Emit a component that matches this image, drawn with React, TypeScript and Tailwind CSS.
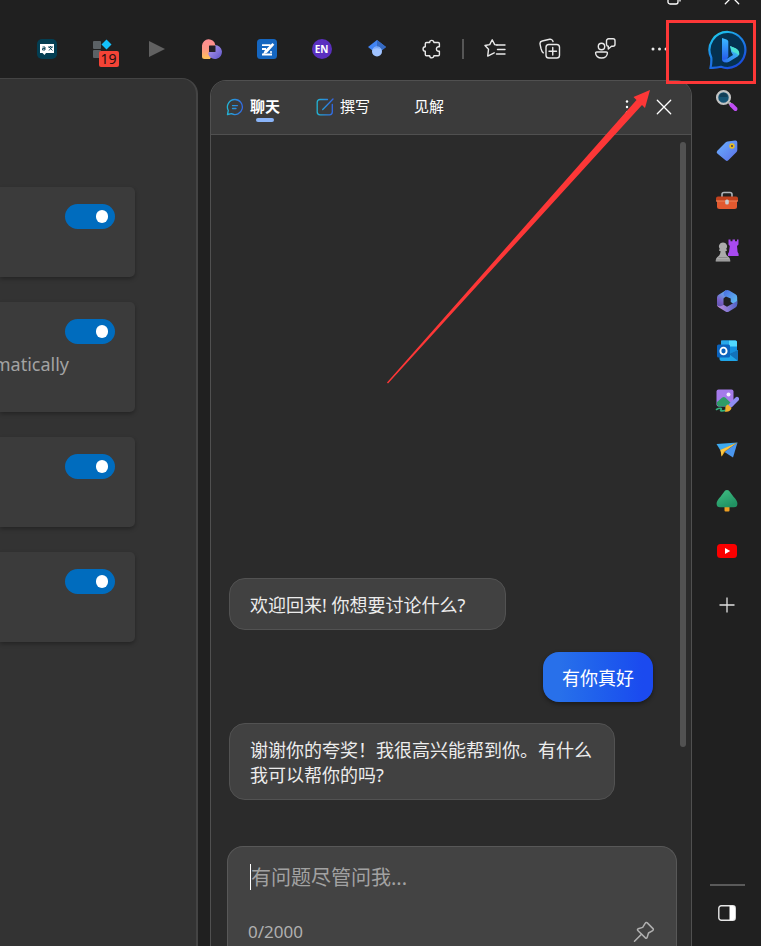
import React, { useState } from "react";

type IconProps = { className?: string };

const line = {
  fill: "none",
  stroke: "currentColor",
  strokeLinecap: "round" as const,
  strokeLinejoin: "round" as const,
};

/* ---------- toolbar icons ---------- */

function DictionaryIcon() {
  return (
    <svg width="20" height="20" viewBox="0 0 20 20">
      <rect width="20" height="20" rx="5" fill="#033e52" />
      <path d="M3 5h14v9H9l-1.500 2-2-2H3z" fill="#fff" />
      <path d="M5.500 8h2.500v3H5.500V9.500H8M11 8h5M13.500 7v1M12 11.500l3-3.500M12 8l3.500 3.500" stroke="#033e52" strokeWidth="0.900" fill="none" />
    </svg>
  );
}

function BlocksIcon() {
  return (
    <svg width="20" height="20" viewBox="0 0 20 20">
      <rect x="1" y="2" width="8" height="8" rx="1" fill="#5b6165" />
      <rect x="1" y="11" width="8" height="8" rx="1" fill="#5b6165" />
      <path d="M14.500 0.500l5 5-5 5-5-5z" fill="#13c0fb" />
    </svg>
  );
}

function PlayIcon() {
  return (
    <svg width="20" height="20" viewBox="0 0 20 20">
      <path d="M2 2l16 8-16 8z" fill="#616161" />
    </svg>
  );
}

function SwirlIcon() {
  return (
    <svg width="22" height="22" viewBox="0 0 22 22">
      <defs>
        <linearGradient id="swirlWarm" x1="0" y1="0" x2="0" y2="1">
          <stop offset="0" stopColor="#ff8d92" />
          <stop offset="0.500" stopColor="#ff9686" />
          <stop offset="1" stopColor="#ffc457" />
        </linearGradient>
        <linearGradient id="swirlCool" x1="0" y1="0" x2="1" y2="1">
          <stop offset="0" stopColor="#b79df0" />
          <stop offset="1" stopColor="#5d55c8" />
        </linearGradient>
      </defs>
      <path d="M1 7.500a6.700 6.700 0 0 1 13.300-.5v4L9 21H3.500A2.500 2.500 0 0 1 1 18.500z" fill="url(#swirlWarm)" />
      <path d="M14 7a7 7 0 1 1-6.500 9.700C7 15.500 7.500 14.500 8 14h6z" fill="url(#swirlCool)" />
      <rect x="8" y="7.500" width="6.500" height="6.500" rx="0.500" fill="#232027" />
    </svg>
  );
}

function NoteIcon() {
  return (
    <svg width="20" height="20" viewBox="0 0 20 20">
      <rect width="20" height="20" rx="3.500" fill="#1566c0" />
      <path d="M5 6.200h8.500M5 10h4M5 15.500h10" stroke="#fff" strokeWidth="1.800" />
      <path d="M15.500 4l1.800 1.800-7.300 8-4 1.700 1.500-3.800z" fill="#fff" />
      <path d="M13 13h2" stroke="#fff" strokeWidth="1.500" />
    </svg>
  );
}

function ScholarIcon() {
  return (
    <svg width="20" height="20" viewBox="0 0 20 20">
      <path d="M10 1L1 8l5 4h8l5-4z" fill="#4285f4" />
      <path d="M10 1l9 7-5 4h-4z" fill="#356ac3" />
      <circle cx="10" cy="12.500" r="5" fill="#a0c3ff" />
      <path d="M5.500 10.500a5 5 0 0 1 9 0 9 9 0 0 0-9 0z" fill="#76a7fa" />
    </svg>
  );
}

function PuzzleIcon() {
  return (
    <svg width="20" height="20" viewBox="0 0 20 20" {...line} strokeWidth="1.400">
      <path d="M4.500 3.500h3.200a2 2 0 0 1 4.200 0h4.300a1.200 1.200 0 0 1 1.200 1.200v3.100h-1.200a2.300 2.300 0 0 0 0 4.500h1.200v3.300a1.200 1.200 0 0 1-1.200 1.200h-4.300a2 2 0 0 1-4.200 0H4.500a1.200 1.200 0 0 1-1.200-1.200v-3.300a2.200 2.200 0 0 1 0-4.500V4.700a1.200 1.200 0 0 1 1.200-1.200z" />
    </svg>
  );
}

function FavoritesIcon() {
  return (
    <svg width="22" height="22" viewBox="0 0 22 22" {...line} strokeWidth="1.400">
      <path d="M13 7l-2.300-.4L8.200 1.800 5.700 6.600 1 7.500l3.500 3.800-.8 6.800 4.500-2.300 2-1" />
      <path d="M13 7h8M13.500 11.500H21M12.500 16H21" />
    </svg>
  );
}

function CollectionsIcon() {
  return (
    <svg width="22" height="22" viewBox="0 0 22 22" {...line} strokeWidth="1.400">
      <path d="M4.300 14.800C3 14 2.500 12.500 2 10.500L1.100 6.300A2.800 2.800 0 0 1 3.200 3l7.500-1.700A2.800 2.800 0 0 1 14 3.500" />
      <rect x="7" y="6.500" width="13.500" height="13.500" rx="2.800" />
      <path d="M13.750 9.500v7.500M10 13.250h7.500" />
    </svg>
  );
}

function FeedbackIcon() {
  return (
    <svg width="22" height="22" viewBox="0 0 22 22" {...line} strokeWidth="1.400">
      <circle cx="7.500" cy="8.500" r="3.200" />
      <path d="M2.700 14h9.600a1.100 1.100 0 0 1 1.100 1.100c0 2.800-2.500 4.900-5.900 4.900s-5.900-2.100-5.900-4.900A1.100 1.100 0 0 1 2.700 14z" />
      <path d="M12.500 2.800a2 2 0 0 1 2-2H19a2 2 0 0 1 2 2v3.400a2 2 0 0 1-2 2h-1.500L14.300 11V8.200a2 2 0 0 1-1.800-2z" />
    </svg>
  );
}

function MoreIcon() {
  return (
    <svg width="20" height="20" viewBox="0 0 20 20" fill="currentColor">
      <circle cx="3" cy="10" r="1.500" />
      <circle cx="9.500" cy="10" r="1.500" />
      <circle cx="16" cy="10" r="1.500" />
    </svg>
  );
}

/* ---------- side rail icons ---------- */

function BingIcon() {
  return (
    <svg width="40" height="40" viewBox="0 0 40 40">
      <defs>
        <linearGradient id="bingRing" x1="0" y1="0" x2="0.600" y2="1">
          <stop offset="0" stopColor="#1fd6ee" />
          <stop offset="0.500" stopColor="#1c86e8" />
          <stop offset="1" stopColor="#1a4fdd" />
        </linearGradient>
        <linearGradient id="bingStem" x1="0" y1="0" x2="0" y2="1">
          <stop offset="0" stopColor="#3bb9ff" />
          <stop offset="1" stopColor="#2350ea" />
        </linearGradient>
        <linearGradient id="bingLeaf" x1="0" y1="1" x2="1" y2="0">
          <stop offset="0" stopColor="#2b6ff0" />
          <stop offset="0.600" stopColor="#38a6f4" />
          <stop offset="1" stopColor="#45e6d0" />
        </linearGradient>
      </defs>
      <path d="M20.500 2A18 18 0 1 1 13 36.800c-3 .8-6.500 1.200-10.500 1 .8-3 1-6 .8-10A18 18 0 0 1 20.500 2z" fill="#053150" stroke="url(#bingRing)" strokeWidth="2.200" />
      <path d="M14 8l4.500 1.600c1.200.5 1.800 1.200 1.800 2.400v14.500L17 32.500c-2-.3-3-1.500-3-3.500z" fill="url(#bingStem)" />
      <path d="M22 16l6 2.500c3 1.500 4 5 2 7.700l-8.500 5.300c-3.500 2-6.500.5-7.500-2.500 1.500 1.200 3 1 4.500 0l6.500-4-1.800-3z" fill="url(#bingLeaf)" />
      <path d="M22 16l5.500 2.200c3.200 1.500 4.500 4.800 3.500 7.300-1-1.700-2.800-2.500-5.500-3.300l-1.500-1z" fill="#4be2d4" />
    </svg>
  );
}

function SearchIcon() {
  return (
    <svg width="24" height="24" viewBox="0 0 24 24">
      <path d="M14 13.500l5 5" stroke="#b9b9b9" strokeWidth="2.500" />
      <path d="M16.500 16l4 4" stroke="#c04df5" strokeWidth="4" strokeLinecap="round" />
      <circle cx="8.500" cy="8.500" r="6.400" fill="#155475" stroke="#c3c3c3" strokeWidth="2.300" />
      <path d="M4.500 8a4 4 0 0 1 8 0z" fill="#123e57" />
    </svg>
  );
}

function TagIcon() {
  return (
    <svg width="24" height="24" viewBox="0 0 24 24">
      <defs>
        <linearGradient id="tagBlue" x1="0" y1="0" x2="1" y2="1">
          <stop offset="0" stopColor="#6ab2ff" />
          <stop offset="1" stopColor="#5b6fe6" />
        </linearGradient>
      </defs>
      <path d="M12.500 2.500L20 1.500a2 2 0 0 1 2.300 2V11a3 3 0 0 1-1 2.200l-8 8a2 2 0 0 1-2.800 0L2.300 14.500a2 2 0 0 1 0-2.800L10 4a4 4 0 0 1 2.500-1.500z" fill="url(#tagBlue)" />
      <circle cx="17" cy="7" r="2.700" fill="#e9bd1d" />
      <circle cx="17" cy="7" r="1" fill="#3c3a60" />
    </svg>
  );
}

function ToolboxIcon() {
  return (
    <svg width="24" height="24" viewBox="0 0 24 24">
      <path d="M7 8V5.500A2 2 0 0 1 9 3.500h6a2 2 0 0 1 2 2V8" stroke="#aeb3b8" strokeWidth="1.600" fill="none" />
      <path d="M2 11h20v6.500a2.500 2.500 0 0 1-2.500 2.500h-15A2.500 2.500 0 0 1 2 17.500z" fill="#e2592f" />
      <path d="M3 7.500h18a2 2 0 0 1 2 2v2.700H1V9.500a2 2 0 0 1 2-2z" fill="#c2411d" />
      <path d="M1 12h22" stroke="#f38b60" strokeWidth="1" />
      <rect x="10.200" y="10.500" width="3.600" height="5" rx="1.500" fill="#c9cdd0" />
    </svg>
  );
}

function ChessIcon() {
  return (
    <svg width="24" height="24" viewBox="0 0 24 24">
      <path d="M13.500 0.500h2v1.800h2V0.500H20v1.800h2V0.500h1.500V5.500L22 7l.6 6 1 1.800v2.200H13v-2.200l1-1.800.8-6-1.300-1.500z" fill="#a94af0" />
      <path d="M8 3.500a4 4 0 0 1 3 6.700h.8V12H10.500c0 3 1 4.500 3.500 6.500 1 1 1.300 2.200 1.300 4H.7c0-1.800.3-3 1.300-4C4.500 16.500 5.500 15 5.500 12H4.200v-1.800H5A4 4 0 0 1 8 3.500z" fill="#ababab" />
      <path d="M3.500 18.500h9M1 21h14" stroke="#8b8b8b" strokeWidth="1" />
    </svg>
  );
}

function OfficeIcon() {
  return (
    <svg width="24" height="24" viewBox="0 0 24 24">
      <defs>
        <linearGradient id="officeA" x1="0" y1="0" x2="1" y2="1">
          <stop offset="0" stopColor="#4b6be0" />
          <stop offset="1" stopColor="#61c7f3" />
        </linearGradient>
        <linearGradient id="officeB" x1="0.500" y1="0" x2="0" y2="1">
          <stop offset="0" stopColor="#64b5f2" />
          <stop offset="0.600" stopColor="#7a5fc5" />
          <stop offset="1" stopColor="#5350a5" />
        </linearGradient>
        <linearGradient id="officeC" x1="0" y1="0" x2="1" y2="0">
          <stop offset="0" stopColor="#c78fe0" />
          <stop offset="1" stopColor="#4f65c8" />
        </linearGradient>
      </defs>
      <path d="M11 1.300L4 5.500A3.500 3.500 0 0 0 2 8.800v6.700a3 3 0 0 0 5 1.800l1.500-1.500V9.500l5-4.500z" fill="url(#officeB)" />
      <path d="M10.500 1.500c1.200-.8 2.500-.8 3.700 0l6.300 3.800A3.500 3.500 0 0 1 22.200 8.500v6c0 2-1.500 1.500-2.500 1l-4-2.500V9.500L9 6.800c-1-2-.5-4 1.500-5.300z" fill="url(#officeA)" />
      <path d="M22.200 11v4.500a3.500 3.500 0 0 1-1.700 3L14 22.500a3.500 3.500 0 0 1-3.500 0L4 18.500a3.500 3.500 0 0 1-2-3c1 1.800 3 2.300 4.500 1.500l2-1.200 3.500 2 7-4c2-1 3-1.500 3.200-2.800z" fill="url(#officeC)" />
    </svg>
  );
}

function OutlookIcon() {
  return (
    <svg width="24" height="24" viewBox="0 0 24 24">
      <rect x="6" y="1.500" width="16" height="14" rx="1.500" fill="#1490df" />
      <path d="M14 1.500h6.500A1.500 1.500 0 0 1 22 3v4.500h-8z" fill="#50d9ff" />
      <path d="M6 1.500h8v6H6z" fill="#28a8ea" />
      <path d="M4.500 12l9.500 3 9-4v9.500a1.500 1.500 0 0 1-1.500 1.500h-15a2 2 0 0 1-2-2z" fill="#1fa5e8" />
      <path d="M23 11v9.500a1 1 0 0 1-.5 1L14 15z" fill="#1272bb" />
      <rect x="2" y="5.500" width="13" height="13" rx="1.500" fill="#0a63bd" />
      <ellipse cx="8.500" cy="12" rx="3.100" ry="3.400" fill="none" stroke="#fff" strokeWidth="1.900" />
    </svg>
  );
}

function DesignerIcon() {
  return (
    <svg width="24" height="24" viewBox="0 0 24 24">
      <rect x="1.500" y="0.500" width="17" height="17" rx="2" fill="#a57bea" />
      <path d="M2 16v-3l5-4.200a2.500 2.500 0 0 1 3.500 0L17 15v2.500H3.500z" fill="#2f9c68" />
      <circle cx="13.500" cy="5.500" r="2" fill="#f4edff" />
      <path d="M1.500 20.500c3-2 6-1.500 4.500 0s1 2 5 .5" stroke="#32b17c" strokeWidth="1.600" fill="none" strokeLinecap="round" />
      <path d="M22 10l-6.500 6.500" stroke="#8f8df2" strokeWidth="4.200" strokeLinecap="round" />
      <path d="M13 15.500l3.500 3.500c-.5 3-4 4.500-7 3.500 1.500-1 .8-2 .8-3.500s1-3 2.700-3.500z" fill="#f2b12c" />
    </svg>
  );
}

function DropIcon() {
  return (
    <svg width="24" height="24" viewBox="0 0 24 24">
      <path d="M1.500 5L22.500 3.500 5.500 11.500z" fill="#3eaaf0" />
      <path d="M22.500 3.500L5.500 11l1.200 6.500 3-4.500z" fill="#eea51b" />
      <path d="M5.500 11l17-7.500L8.500 12.500 6.700 17.500z" fill="#f9c846" />
      <path d="M22.500 3.500L9.500 13l8.500 5.500z" fill="#4a96ee" />
    </svg>
  );
}

function TreeIcon() {
  return (
    <svg width="24" height="24" viewBox="0 0 24 24">
      <defs>
        <linearGradient id="treeGreen" x1="0" y1="0" x2="0.500" y2="1">
          <stop offset="0" stopColor="#41c084" />
          <stop offset="1" stopColor="#219263" />
        </linearGradient>
      </defs>
      <rect x="9.500" y="16" width="5" height="6.500" rx="1" fill="#ee9f22" />
      <path d="M12 1c1.500 0 2.300.8 3 1.900l3.200 4.300c.6 1 1.500 1.500 2.300 2.800 1.500 2 1.900 3.500 1.900 4.700a3.500 3.500 0 0 1-3.500 3.500H5.100a3.500 3.500 0 0 1-3.500-3.500c0-1.200.4-2.700 1.900-4.700.8-1.300 1.700-1.800 2.300-2.800L9 2.900C9.700 1.800 10.500 1 12 1z" fill="url(#treeGreen)" />
    </svg>
  );
}

function YouTubeIcon() {
  return (
    <svg width="24" height="24" viewBox="0 0 24 24">
      <rect x="2" y="5" width="20" height="14" rx="3.500" fill="#fb0000" />
      <path d="M10 9l5.200 3-5.200 3z" fill="#fff" />
    </svg>
  );
}

/* ---------- small line icons ---------- */

function PlusIcon() {
  return (
    <svg width="16" height="16" viewBox="0 0 16 16" stroke="#e0e0e0" strokeWidth="1.300">
      <path d="M8 0.500v15M0.500 8h15" />
    </svg>
  );
}

function SidebarIcon() {
  return (
    <svg width="18" height="16" viewBox="0 0 18 16">
      <rect x="0.800" y="0.800" width="16.400" height="14.400" rx="2.500" fill="none" stroke="#e6e6e6" strokeWidth="1.400" />
      <path d="M11.500 1H15a2 2 0 0 1 2 2v10a2 2 0 0 1-2 2h-3.500z" fill="#fff" />
    </svg>
  );
}

function CloseIcon({ className }: IconProps) {
  return (
    <svg className={className} width="16" height="16" viewBox="0 0 16 16" {...line} strokeWidth="1.300">
      <path d="M1.300 1.300l13.400 13.400M14.700 1.300L1.300 14.700" />
    </svg>
  );
}

function PinIcon() {
  return (
    <svg width="22" height="22" viewBox="0 0 22 22" {...line} strokeWidth="1.500">
      <path d="M14.300 1.900l5.700 5.700a1.300 1.300 0 0 1-.3 2l-4.200 2.400-1.400 4.500a1 1 0 0 1-1.700.4L4.800 9.500a1 1 0 0 1 .4-1.700L9.700 6.400 12.300 2.200a1.300 1.300 0 0 1 2-.3z" />
      <path d="M8.500 13.200L1.500 20.300" />
    </svg>
  );
}

function ChatTabIcon() {
  return (
    <svg width="18" height="18" viewBox="0 0 18 18" fill="none" stroke="url(#chatTab)" strokeWidth="1.300" strokeLinecap="round" strokeLinejoin="round">
      <defs>
        <linearGradient id="chatTab" gradientUnits="userSpaceOnUse" x1="1" y1="9" x2="17" y2="9">
          <stop offset="0" stopColor="#22b4d3" />
          <stop offset="1" stopColor="#3268e6" />
        </linearGradient>
      </defs>
      <path d="M9 1.500a7.500 7.500 0 1 1-3.500 14.200L1.500 16.500l.8-4A7.500 7.500 0 0 1 9 1.500z" />
      <path d="M6.500 7.600h5M6.500 10.500h3.500" />
    </svg>
  );
}

function ComposeTabIcon() {
  return (
    <svg width="18" height="18" viewBox="0 0 18 18" fill="none" stroke="url(#composeTab)" strokeWidth="1.300" strokeLinecap="round" strokeLinejoin="round">
      <defs>
        <linearGradient id="composeTab" gradientUnits="userSpaceOnUse" x1="1" y1="9" x2="17" y2="9">
          <stop offset="0" stopColor="#22b4d3" />
          <stop offset="1" stopColor="#3268e6" />
        </linearGradient>
      </defs>
      <path d="M11.500 1.500H4A2.800 2.800 0 0 0 1.200 4.300V14A2.800 2.800 0 0 0 4 16.800h9.500a2.800 2.800 0 0 0 2.800-2.800V6.500" />
      <path d="M17 1L8 10.200l-1.300 1.300" />
    </svg>
  );
}

/* ---------- page parts ---------- */

function ToolButton({ label, children }: { label: string; children: React.ReactNode }) {
  return (
    <button type="button" aria-label={label} className="flex h-10 w-[55px] shrink-0 items-center justify-center text-[#e8e8e8]">
      {children}
    </button>
  );
}

function Toolbar() {
  return (
    <div className="flex h-[58px] shrink-0 items-center pl-[19px]">
      <ToolButton label="Dictionary"><DictionaryIcon /></ToolButton>
      <ToolButton label="Blocks">
        <span className="relative">
          <BlocksIcon />
          <span className="absolute top-3 left-[7px] rounded-xs bg-[#f44336] px-0.5 font-['Noto_Sans'] text-sm leading-4 text-[#231010]">19</span>
        </span>
      </ToolButton>
      <ToolButton label="Play"><PlayIcon /></ToolButton>
      <ToolButton label="Swirl"><SwirlIcon /></ToolButton>
      <ToolButton label="Notes"><NoteIcon /></ToolButton>
      <ToolButton label="Language">
        <span className="flex size-5 items-center justify-center rounded-full bg-[#5a2fbf] font-['Open_Sans'] text-[10px] font-bold text-white">EN</span>
      </ToolButton>
      <ToolButton label="Scholar"><ScholarIcon /></ToolButton>
      <ToolButton label="Extensions"><PuzzleIcon /></ToolButton>
      <span className="mx-[3px] h-5 w-0.5 shrink-0 bg-[#565656]" />
      <ToolButton label="Favorites"><FavoritesIcon /></ToolButton>
      <ToolButton label="Collections"><CollectionsIcon /></ToolButton>
      <ToolButton label="Feedback"><FeedbackIcon /></ToolButton>
      <ToolButton label="More"><MoreIcon /></ToolButton>
    </div>
  );
}

function SettingCard({ note, label }: { note?: string; label: string }) {
  const [on, setOn] = useState(true);
  return (
    <section className={`flex flex-col items-end rounded-r-[5px] bg-[#3b3b3b] pt-[17px] pr-5 shadow-[0_2px_4px_rgba(0,0,0,0.3)] ${note ? "h-[110px]" : "h-[90px]"}`}>
      <label className="block cursor-pointer">
        <input type="checkbox" aria-label={label} checked={on} onChange={(e) => setOn(e.target.checked)} className="peer sr-only" />
        <span className="flex h-[25px] w-[50px] items-center rounded-full bg-[#555] px-[7px] peer-checked:justify-end peer-checked:bg-[#006cbe]">
          <span className="h-[13px] w-3 rounded-full bg-white" />
        </span>
      </label>
      {note && <p className="mt-2 pr-[46px] font-['Noto_Sans'] text-lg leading-6 text-[#a3a3a3]">{note}</p>}
    </section>
  );
}

function SettingsPane() {
  return (
    <main className="flex w-[198px] shrink-0 flex-col gap-[25px] overflow-hidden rounded-tr-2xl border-t border-r-2 border-[#444] bg-[#333] pt-[108px] pr-[61px]">
      <SettingCard label="Setting 1" />
      <SettingCard label="Setting 2" note="matically" />
      <SettingCard label="Setting 3" />
      <SettingCard label="Setting 4" />
    </main>
  );
}

function ChatPanel() {
  return (
    <section className="mt-0.5 ml-3 flex min-w-0 flex-1 flex-col overflow-hidden rounded-t-2xl border border-b-0 border-[#505050] bg-[#2b2b2b]">
      <header className="flex h-[54px] shrink-0 items-center border-b border-[#505050] bg-[#3b3b3b] pr-[19px] pb-px pl-[15px] text-[15px] leading-5 text-white">
        <nav className="flex flex-1 items-start pt-1">
          <button type="button" className="flex items-start gap-1.5">
            <span className="pt-0.5"><ChatTabIcon /></span>
            <span className="flex flex-col items-center font-bold">
              聊天
              <span className="mt-0.5 h-1 w-[18px] rounded-full bg-[#8ab4f8]" />
            </span>
          </button>
          <button type="button" className="ml-9 flex items-start gap-1.5">
            <span className="pt-0.5"><ComposeTabIcon /></span>
            撰写
          </button>
          <button type="button" className="ml-11">见解</button>
        </nav>
        <button type="button" aria-label="More options" className="mr-[26px]">
          <svg width="6" height="16" viewBox="0 0 6 16" fill="#fff">
            <circle cx="3" cy="2.500" r="1.200" />
            <circle cx="3" cy="8" r="1.200" />
            <circle cx="3" cy="13.500" r="1.200" />
          </svg>
        </button>
        <button type="button" aria-label="Close"><CloseIcon /></button>
      </header>

      <div className="flex min-h-0 flex-1">
        <div className="flex min-w-0 flex-1 flex-col">
          <div className="flex flex-1 flex-col justify-end pr-[27px] pl-[18px] text-lg leading-[25px] text-[#ececec]">
            <p className="min-w-[277px] self-start rounded-2xl border border-[#525252] bg-[#414141] px-5 pt-3.5 pb-[11px]">欢迎回来! 你想要讨论什么?</p>
            <p className="mt-[22px] self-end rounded-2xl bg-linear-to-r from-[#2870ea] from-15% to-[#1b4aef] to-90% px-[19px] pt-3.5 pb-[11px] text-white shadow-[0_2px_4px_rgba(0,0,0,0.4)]">有你真好</p>
            <p className="mt-[21px] max-w-[386px] self-start rounded-2xl border border-[#525252] bg-[#414141] px-5 pt-3.5 pb-[11px]">谢谢你的夸奖！我很高兴能帮到你。有什么我可以帮你的吗?</p>
          </div>
          <form className="mt-[46px] mr-[3px] ml-4 flex h-[100px] shrink-0 flex-col rounded-t-2xl border border-b-0 border-[#585858] bg-[#434343] pt-4 pr-[21px] pl-5">
            <div className="flex items-center pl-0.5">
              <span className="h-[26px] w-px shrink-0 bg-white" />
              <input type="text" aria-label="Message" placeholder="有问题尽管问我..." className="h-7 min-w-0 flex-1 bg-transparent pt-0.5 text-xl text-white outline-none placeholder:text-[#a2a2a2]" />
            </div>
            <div className="mt-[29px] flex items-center justify-between text-[#b0b0b0]">
              <span className="font-['Noto_Sans'] text-[17px] leading-6">0/2000</span>
              <button type="button" aria-label="Pin"><PinIcon /></button>
            </div>
          </form>
        </div>
        <div className="flex w-[11px] shrink-0 justify-start pt-[7px] pb-[199px]">
          <div className="w-1.5 rounded-full bg-[#525252]" />
        </div>
      </div>
    </section>
  );
}

const railItems = [
  { label: "Search", Icon: SearchIcon },
  { label: "Shopping", Icon: TagIcon },
  { label: "Tools", Icon: ToolboxIcon },
  { label: "Games", Icon: ChessIcon },
  { label: "Office", Icon: OfficeIcon },
  { label: "Outlook", Icon: OutlookIcon },
  { label: "Designer", Icon: DesignerIcon },
  { label: "Drop", Icon: DropIcon },
  { label: "Tree", Icon: TreeIcon },
  { label: "YouTube", Icon: YouTubeIcon },
];

function SideRail() {
  return (
    <aside className="flex w-[69px] shrink-0 flex-col items-center pt-1">
      <button type="button" aria-label="Bing" className="flex h-[51px] items-center pl-[3px]"><BingIcon /></button>
      {railItems.map(({ label, Icon }) => (
        <button key={label} type="button" aria-label={label} className="flex h-[50px] w-full items-center justify-center pt-px pl-px">
          <Icon />
        </button>
      ))}
      <button type="button" aria-label="Add" className="mt-[22px]"><PlusIcon /></button>
      <div className="mt-auto flex flex-col items-center gap-[19px] pb-[25px] pl-px">
        <span className="h-0.5 w-[35px] bg-[#5a5a5a]" />
        <button type="button" aria-label="Toggle sidebar"><SidebarIcon /></button>
      </div>
    </aside>
  );
}

function TitleBar() {
  return (
    <div className="flex h-5 shrink-0 items-start justify-end gap-[43px] overflow-hidden pr-[21px] text-white">
      <button type="button" aria-label="Restore" className="flex h-[5px] items-end overflow-hidden">
        <svg className="shrink-0" width="14" height="14" viewBox="0 0 14 14" {...line} strokeWidth="1.300">
          <rect x="1" y="3" width="10" height="10" rx="2" />
          <path d="M4 1h6a3 3 0 0 1 3 3v6" />
        </svg>
      </button>
      <button type="button" aria-label="Close window" className="flex h-[5px] items-end overflow-hidden">
        <CloseIcon className="shrink-0" />
      </button>
    </div>
  );
}

function Annotation() {
  return (
    <div className="pointer-events-none absolute top-5 right-[5px]">
      <div className="h-16 w-[90px] border-3 border-[#fd3737]" />
      <svg className="absolute top-[69px] right-[105px]" width="265" height="295" viewBox="0 0 265 295">
        <path d="M1 293.500L250.500 11 247.500 8 264 1 259 19 256 16 2 294.500z" fill="#fd3737" />
      </svg>
    </div>
  );
}

export default function App() {
  return (
    <div className="relative flex h-screen flex-col overflow-hidden bg-[#202020] font-['Noto_Sans','Noto_Sans_CJK_SC',sans-serif]">
      <TitleBar />
      <div className="flex min-h-0 flex-1">
        <div className="flex min-w-0 flex-1 flex-col">
          <Toolbar />
          <div className="flex min-h-0 flex-1">
            <SettingsPane />
            <ChatPanel />
          </div>
        </div>
        <SideRail />
      </div>
      <Annotation />
    </div>
  );
}
